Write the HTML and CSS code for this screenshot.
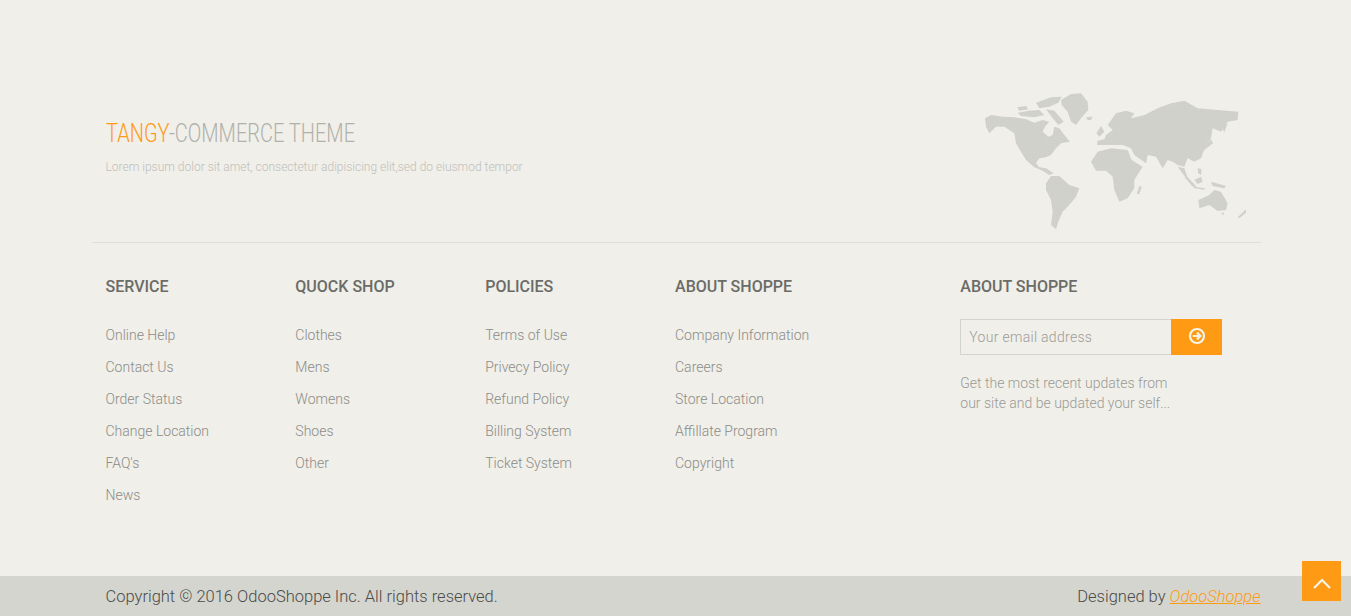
FILE: index.html
```html
<!DOCTYPE html>
<html lang="en">
<head>
<meta charset="utf-8">
<title>Tangy-Commerce Theme</title>
<link rel="stylesheet" href="styles.css">
</head>
<body>
<footer class="footer">
  <div class="container">
    <section class="intro">
      <div class="intro-text">
        <h2 class="brand-title"><span class="brand-accent">TANGY</span>-COMMERCE THEME</h2>
        <p class="brand-sub">Lorem ipsum dolor sit amet, consectetur adipisicing elit,sed do eiusmod tempor</p>
      </div>
      <svg class="world-map" viewBox="0 0 870 510" aria-hidden="true">
        <defs>
          <pattern id="dots" width="6" height="6" patternUnits="userSpaceOnUse">
            <rect width="6" height="6" fill="#cfcfca"/>
            <rect x="0" y="0" width="1.2" height="6" fill="#d6d6d0"/>
            <rect x="0" y="0" width="6" height="1.2" fill="#d6d6d0"/>
          </pattern>
        </defs>
        <g class="land" fill="url(#dots)">
          <path d="M42 115L60 105L95 110L130 112L165 118L190 128L215 120L235 125L222 140L215 155L232 170L245 165L250 140L265 145L280 165L297 185L270 190L255 205L240 225L225 232L205 235L195 250L205 262L225 265L248 280L235 285L215 272L190 262L165 240L150 215L135 190L130 160L100 140L75 140L55 160L45 140Z"/>
          <path d="M270 60L300 42L330 40L350 65L352 90L330 115L315 135L300 125L290 95L272 75Z"/>
          <path d="M138 82L165 78L172 88L145 92Z"/>
          <path d="M195 68L240 52L272 50L262 68L235 80L205 85Z"/>
          <path d="M140 98L175 92L205 90L220 105L190 112L150 108Z"/>
          <path d="M225 88L250 92L278 125L262 135L240 108Z"/>
          <path d="M345 112L365 110L360 120L350 120Z"/>
          <path d="M225 310L240 288L265 288L295 315L325 325L315 350L295 375L275 395L262 425L255 448L240 435L245 395L240 360L225 330Z"/>
          <path d="M360 245L380 215L420 205L470 210L482 240L515 260L490 300L490 325L470 355L445 365L430 330L425 290L405 272L375 272Z"/>
          <path d="M505 318L512 320L505 342L497 342Z"/>
          <path d="M378 195L380 182L400 178L405 165L425 150L410 135L435 100L465 92L490 100L480 115L520 105L560 85L600 70L640 62L680 85L740 90L802 95L800 120L770 125L750 155L725 145L720 175L705 195L690 235L670 245L650 235L640 260L620 255L605 245L590 240L575 265L555 230L530 225L525 250L490 225L480 205L455 195L425 195L400 195Z"/>
          <path d="M720 178L726 190L700 210L694 205Z"/>
          <path d="M750 140L770 130L760 157Z"/>
          <path d="M376 160L390 138L400 155L385 170Z"/>
          <path d="M620 260L640 265L652 300L638 285Z"/>
          <path d="M640 290L650 292L677 320L665 320Z"/>
          <path d="M670 300L690 290L695 305L680 312Z"/>
          <path d="M680 265L692 268L690 285L682 280Z"/>
          <path d="M720 305L765 318L760 325L725 318Z"/>
          <path d="M668 320L702 325L700 329L670 325Z"/>
          <path d="M682 360L715 345L730 330L750 335L770 370L765 390L740 393L715 375L685 385Z"/>
          <path d="M800 412L825 388L825 398L805 415Z"/>
          <path d="M750 398L760 398L757 406Z"/>
        </g>
      </svg>
    </section>
    <section class="links">
      <div class="col col-small">
        <h3 class="col-title">SERVICE</h3>
        <ul class="link-list">
          <li>Online Help</li>
          <li>Contact Us</li>
          <li>Order Status</li>
          <li>Change Location</li>
          <li>FAQ's</li>
          <li>News</li>
        </ul>
      </div>
      <div class="col col-small">
        <h3 class="col-title">QUOCK SHOP</h3>
        <ul class="link-list">
          <li>Clothes</li>
          <li>Mens</li>
          <li>Womens</li>
          <li>Shoes</li>
          <li>Other</li>
        </ul>
      </div>
      <div class="col col-small">
        <h3 class="col-title">POLICIES</h3>
        <ul class="link-list">
          <li>Terms of Use</li>
          <li>Privecy Policy</li>
          <li>Refund Policy</li>
          <li>Billing System</li>
          <li>Ticket System</li>
        </ul>
      </div>
      <div class="col col-wide">
        <h3 class="col-title">ABOUT SHOPPE</h3>
        <ul class="link-list">
          <li>Company Information</li>
          <li>Careers</li>
          <li>Store Location</li>
          <li>Affillate Program</li>
          <li>Copyright</li>
        </ul>
      </div>
      <div class="col col-wide">
        <h3 class="col-title">ABOUT SHOPPE</h3>
        <form class="subscribe">
          <input class="email" type="text" placeholder="Your email address">
          <button class="send" type="button" aria-label="Subscribe">
            <svg viewBox="0 0 18 18" width="18" height="18" aria-hidden="true">
              <circle cx="9" cy="9" r="7" fill="none" stroke="#f5f3ea" stroke-width="2.2"/>
              <path d="M4.8 9H12M9 5.6L12.4 9L9 12.4" fill="none" stroke="#f5f3ea" stroke-width="2.2"/>
            </svg>
          </button>
        </form>
        <p class="subscribe-note">Get the most recent updates from<br>our site and be updated your self...</p>
      </div>
    </section>
  </div>
  <div class="bottom-bar">
    <div class="bottom-inner">
      <span>Copyright © 2016 OdooShoppe Inc. All rights reserved.</span>
      <span>Designed by <a class="bottom-link" href="#">OdooShoppe</a></span>
    </div>
  </div>
</footer>
<a class="to-top" href="#" aria-label="Back to top">
  <svg viewBox="0 0 40 40" width="40" height="40" aria-hidden="true">
    <path d="M12 27L20 19L28 27" fill="none" stroke="#f5f3ea" stroke-width="2.2"/>
  </svg>
</a>
</body>
</html>
```

FILE: styles.css
```css
* { box-sizing: border-box; }
html, body { margin: 0; height: 100%; overflow: hidden; }
body {
  background: #f0efe9;
  font-family: Roboto, "Liberation Sans", sans-serif;
  font-weight: 300;
  color: #8c8c88;
}
.container {
  width: 1170px;
  margin: 0 auto;
  height: 576px;
}
.intro {
  display: flex;
  justify-content: space-between;
  height: 243px;
  margin-left: 1px;
  border-bottom: 1px solid #dfdfda;
}
.intro-text { padding: 117px 0 0 14px; }
.brand-title {
  margin: 0;
  font-size: 25px;
  line-height: 34px;
  font-weight: 300;
  color: #b1b1ac;
  white-space: nowrap;
  transform: scaleX(0.8);
  transform-origin: left center;
}
.brand-accent { color: #ff9a14; }
.brand-sub {
  margin: 6px 0 0;
  font-size: 12px;
  line-height: 20px;
  color: #c0c0bb;
}
.world-map {
  width: 290px;
  height: 170px;
  margin: 80px 0 0;
  flex: none;
  margin-top: 80px;
  margin-bottom: -7px;
  margin-right: 0;
}
.links {
  display: flex;
  padding: 34px 15px 0;
}
.col-small { width: 195px; }
.col-wide { width: 293px; }
.col-title {
  margin: 0 0 22px;
  font-size: 16px;
  line-height: 20px;
  font-weight: 500;
  color: #6b6b67;
}
.link-list {
  margin: 0;
  padding: 0;
  list-style: none;
  font-size: 14px;
  line-height: 32px;
  color: #8c8c88;
}
.subscribe {
  display: flex;
  width: 262px;
  height: 36px;
  margin-top: 21px;
}
.email {
  flex: 1;
  min-width: 0;
  padding: 0 8px;
  border: 1px solid #d4d4cf;
  border-right: 0;
  background: transparent;
  font: 300 14px Roboto, sans-serif;
  letter-spacing: 0.3px;
  color: #8c8c88;
  outline: none;
}
.email::placeholder { color: #9c9c98; opacity: 1; }
.send {
  display: flex;
  align-items: center;
  justify-content: center;
  width: 51px;
  padding: 0 0 2px;
  border: 0;
  background: #ff9a14;
}
.subscribe-note {
  margin: 18px 0 0;
  font-size: 14px;
  line-height: 20px;
  color: #9a9a96;
}
.bottom-bar {
  height: 40px;
  background: #d4d5cf;
}
.bottom-inner {
  display: flex;
  justify-content: space-between;
  width: 1170px;
  margin: 0 auto;
  padding: 0 0 0 15px;
  font-size: 16.5px;
  line-height: 42px;
  color: #4b4b48;
}
.bottom-link {
  color: #ff9a14;
  font-style: italic;
}
.to-top {
  position: fixed;
  right: 10px;
  bottom: 15px;
  width: 39px;
  height: 40px;
  background: #ff9a14;
}
```
